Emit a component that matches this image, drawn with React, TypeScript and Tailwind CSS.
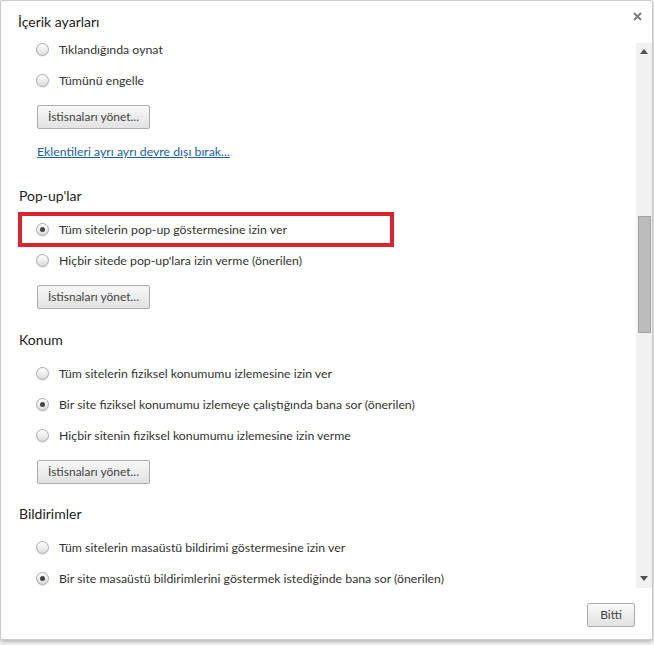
import React from 'react';

type Option = {label: string; checked?: boolean; highlight?: boolean};

const Radio: React.FC<{checked?: boolean}> = ({checked}) => (
    <span className="inline-flex h-[13px] w-[13px] shrink-0 items-center justify-center rounded-full border border-[#a9a9a9] bg-gradient-to-b from-[#ffffff] to-[#dcdcdc] shadow-[0_1px_1px_rgba(0,0,0,0.08)]">
        {checked && <span className="h-[5px] w-[5px] rounded-full bg-[#454545]"/>}
    </span>
);

const RadioRow: React.FC<Option> = ({label, checked, highlight}) => (
    <div className={highlight
        ? '-my-[2px] ml-[17px] flex h-[35px] w-[376px] items-center gap-[10px] border-[4px] border-[#dc2330] pl-[14px]'
        : 'ml-[35px] flex h-[31px] items-center gap-[10px]'}>
        <Radio checked={checked}/>
        <span className="text-[12.3px] leading-[13px] text-[#333333]">{label}</span>
    </div>
);

const ManageButton: React.FC = () => (
    <div className="ml-[36px] mt-[9px] flex">
        <button className="h-[24px] w-[113px] rounded-[2px] border border-[#acacac] bg-gradient-to-b from-[#f8f8f8] to-[#e2e2e2] text-[12px] text-[#444444]">
            İstisnaları yönet...
        </button>
    </div>
);

const Heading: React.FC<{children: React.ReactNode; className: string}> = ({children, className}) => (
    <h3 className={`ml-[18px] mb-[8px] text-[14px] leading-[20px] text-[#222222] ${className}`}>{children}</h3>
);

const App: React.FC = () => {
    return (
        <div className="h-[645px] w-[654px] bg-[#f4f4f4]" style={{fontFamily: 'Lato, "Open Sans", sans-serif'}}>
            <div className="flex h-[640px] w-[653px] flex-col rounded-[3px] border border-[#c8c8c8] bg-white shadow-[0_2px_4px_rgba(0,0,0,0.25)]">
                <div className="flex h-[42px] items-start justify-between">
                    <h2 className="ml-[17px] mt-[11px] text-[14px] leading-[20px] text-[#222222]">İçerik ayarları</h2>
                    <svg width="9" height="9" viewBox="0 0 9 9" className="mr-[10px] mt-[11px]">
                        <path d="M1 1 L8 8 M8 1 L1 8" stroke="#7d7d7d" strokeWidth="2"/>
                    </svg>
                </div>

                <div className="flex h-[545px]">
                    <div className="flex-1 overflow-hidden">
                        <div className="-mt-[9px]">
                            <RadioRow label="Tıklandığında oynat"/>
                            <RadioRow label="Tümünü engelle"/>
                            <ManageButton/>
                            <div className="ml-[36px] mt-[15px] text-[12.3px] leading-[16px] text-[#1d5f9e] underline">
                                Eklentileri ayrı ayrı devre dışı bırak...
                            </div>

                            <Heading className="mt-[26px]">Pop-up'lar</Heading>
                            <RadioRow label="Tüm sitelerin pop-up göstermesine izin ver" checked highlight/>
                            <RadioRow label="Hiçbir sitede pop-up'lara izin verme (önerilen)"/>
                            <ManageButton/>

                            <Heading className="mt-[21px]">Konum</Heading>
                            <RadioRow label="Tüm sitelerin fiziksel konumumu izlemesine izin ver"/>
                            <RadioRow label="Bir site fiziksel konumumu izlemeye çalıştığında bana sor (önerilen)" checked/>
                            <RadioRow label="Hiçbir sitenin fiziksel konumumu izlemesine izin verme"/>
                            <ManageButton/>

                            <Heading className="mt-[20px]">Bildirimler</Heading>
                            <RadioRow label="Tüm sitelerin masaüstü bildirimi göstermesine izin ver"/>
                            <RadioRow label="Bir site masaüstü bildirimlerini göstermek istediğinde bana sor (önerilen)" checked/>
                        </div>
                    </div>

                    <div className="flex w-[16px] flex-col items-center bg-[#f1f1f1]">
                        <svg width="8" height="5" viewBox="0 0 8 5" className="mt-[6px] shrink-0">
                            <path d="M0 5 L4 0 L8 5 Z" fill="#505050"/>
                        </svg>
                        <div className="mt-[162px] h-[117px] w-[13px] border border-[#a2a2a2] bg-[#bcbcbc]"/>
                        <div className="flex-1"/>
                        <svg width="8" height="5" viewBox="0 0 8 5" className="mb-[7px] shrink-0">
                            <path d="M0 0 L8 0 L4 5 Z" fill="#505050"/>
                        </svg>
                    </div>
                </div>

                <div className="flex flex-1 items-start justify-end pr-[17px] pt-[15px]">
                    <button className="h-[24px] w-[48px] rounded-[2px] border border-[#acacac] bg-gradient-to-b from-[#f8f8f8] to-[#e2e2e2] text-[12px] text-[#444444]">
                        Bitti
                    </button>
                </div>
            </div>
        </div>
    );
};

export default App;
